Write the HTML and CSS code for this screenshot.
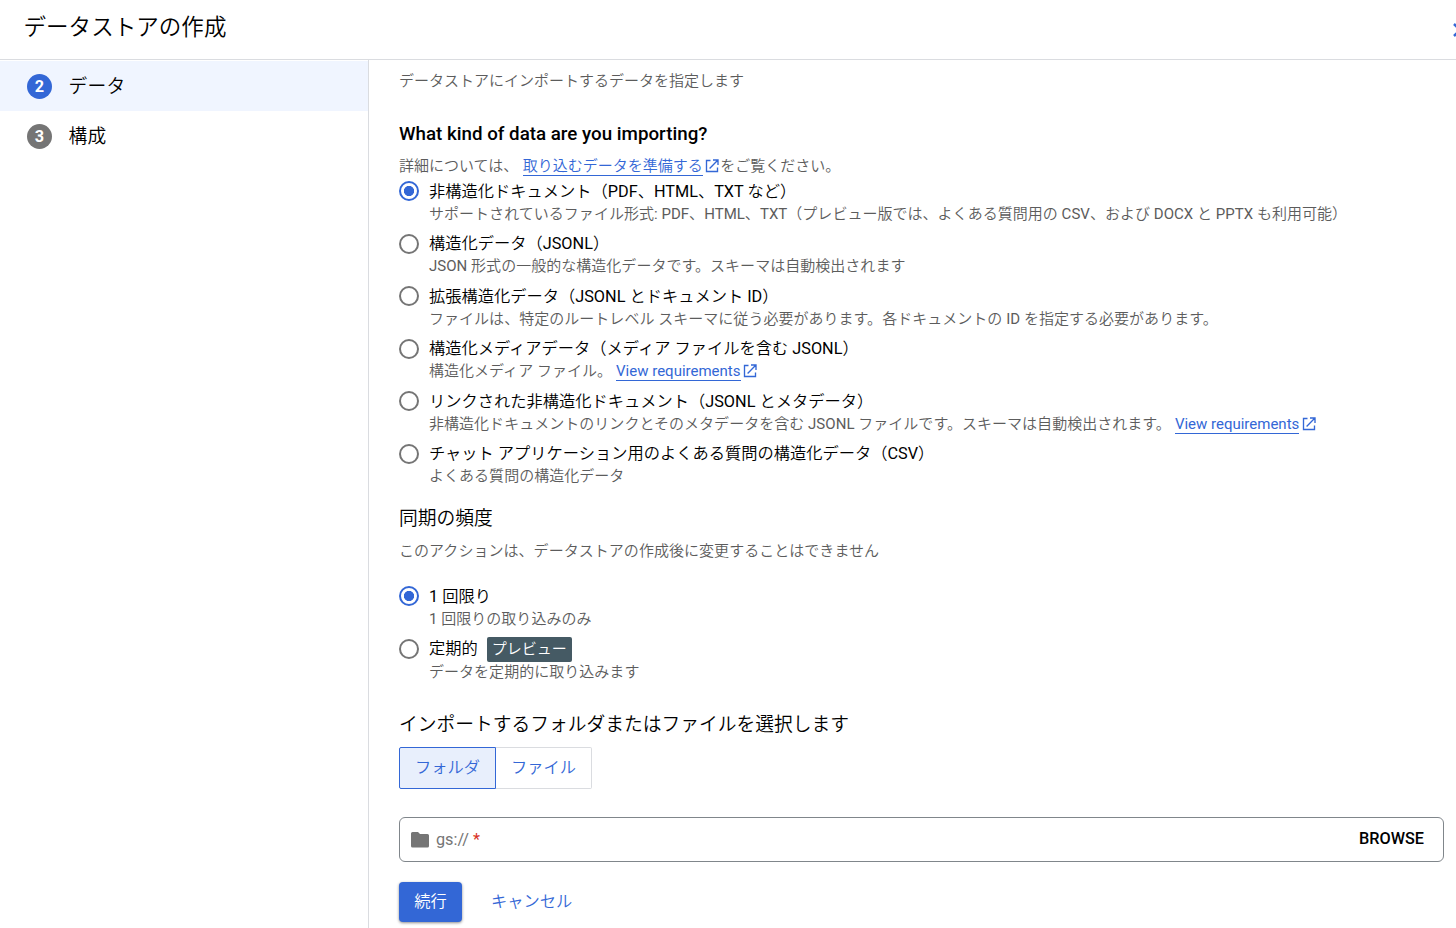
FILE: index.html
```html
<!DOCTYPE html>
<html lang="ja">
<head>
<meta charset="utf-8">
<title>データストアの作成</title>
<link rel="stylesheet" href="styles.css">
</head>
<body>
<svg class="defs" width="0" height="0">
  <symbol id="ext" viewBox="0 0 14 14"><path d="M5.500 1.500H1.500v11h11V8.500M8 1h5v5M12.700 1.300L4.600 9.400" fill="none" stroke="currentColor" stroke-width="1.350"/></symbol>
</svg>
<header class="header">
  <h1 class="title">データストアの作成</h1>
  <svg class="close" width="20" height="20" viewBox="0 0 20 20"><path d="M2 4l12 12M2 16L14 4" stroke="currentColor" stroke-width="2.500"/></svg>
</header>
<div class="body">
  <nav class="steps">
    <div class="step active"><span class="num">2</span><span class="name">データ</span></div>
    <div class="step"><span class="num">3</span><span class="name">構成</span></div>
  </nav>
  <main class="main">
    <p class="text">データストアにインポートするデータを指定します</p>
    <h2 class="heading question">What kind of data are you importing?</h2>
    <p class="text details"><span>詳細については、</span><a class="link prepare">取り込むデータを準備する</a><svg class="ext"><use href="#ext"/></svg><span>をご覧ください。</span></p>
    <div class="radios">
      <div class="option"><span class="radio on"></span><div><div class="label">非構造化ドキュメント（PDF、HTML、TXT など）</div><div class="hint"><span>サポートされているファイル形式: PDF、HTML、TXT（プレビュー版では、よくある質問用の CSV、および DOCX と PPTX も利用可能）</span></div></div></div>
      <div class="option"><span class="radio"></span><div><div class="label">構造化データ（JSONL）</div><div class="hint"><span>JSON 形式の一般的な構造化データです。スキーマは自動検出されます</span></div></div></div>
      <div class="option"><span class="radio"></span><div><div class="label">拡張構造化データ（JSONL とドキュメント ID）</div><div class="hint"><span>ファイルは、特定のルートレベル スキーマに従う必要があります。各ドキュメントの ID を指定する必要があります。</span></div></div></div>
      <div class="option"><span class="radio"></span><div><div class="label">構造化メディアデータ（メディア ファイルを含む JSONL）</div><div class="hint"><span>構造化メディア ファイル。</span><a class="link">View requirements</a><svg class="ext"><use href="#ext"/></svg></div></div></div>
      <div class="option"><span class="radio"></span><div><div class="label">リンクされた非構造化ドキュメント（JSONL とメタデータ）</div><div class="hint"><span>非構造化ドキュメントのリンクとそのメタデータを含む JSONL ファイルです。スキーマは自動検出されます。</span><a class="link">View requirements</a><svg class="ext"><use href="#ext"/></svg></div></div></div>
      <div class="option"><span class="radio"></span><div><div class="label">チャット アプリケーション用のよくある質問の構造化データ（CSV）</div><div class="hint"><span>よくある質問の構造化データ</span></div></div></div>
    </div>
    <h2 class="heading frequency">同期の頻度</h2>
    <p class="text note">このアクションは、データストアの作成後に変更することはできません</p>
    <div class="radios sync">
      <div class="option"><span class="radio on"></span><div><div class="label">1 回限り</div><div class="hint"><span>1 回限りの取り込みのみ</span></div></div></div>
      <div class="option"><span class="radio"></span><div><div class="label">定期的<span class="badge">プレビュー</span></div><div class="hint periodic"><span>データを定期的に取り込みます</span></div></div></div>
    </div>
    <h2 class="heading choose">インポートするフォルダまたはファイルを選択します</h2>
    <div class="toggle"><button class="seg selected">フォルダ</button><button class="seg">ファイル</button></div>
    <div class="field">
      <svg width="18" height="16" viewBox="0 0 18 16"><path d="M1.5 0H7l2 2h7.5Q18 2 18 3.500V14q0 1.500-1.500 1.500h-15Q0 15.500 0 14V1.500Q0 0 1.500 0z" fill="#757575"/></svg>
      <span class="prefix">gs://</span><span class="req">*</span><span class="browse">BROWSE</span>
    </div>
    <div class="actions"><button class="primary">続行</button><button class="cancel">キャンセル</button></div>
  </main>
</div>
</body>
</html>
```
FILE: styles.css
```css
* { box-sizing: border-box; margin: 0; padding: 0; }
body {
  width: 1456px; height: 928px; overflow: hidden; background: #fff; color: #000;
  font-family: Roboto, "Noto Sans CJK JP DemiLight", "Noto Sans CJK JP", sans-serif; font-weight: 400;
  display: flex; flex-direction: column; white-space: nowrap;
}
.defs { position: absolute; }
.header {
  height: 60px; flex: none; border-bottom: 1px solid #dadce0; padding: 0 0 5px 23.5px;
  display: flex; align-items: center; justify-content: space-between;
}
.title { font-size: 22.5px; font-weight: 400; line-height: 30px; letter-spacing: .05px; }
.close { color: #3367d6; margin: 5px -16px 0 0; flex: none; }
.body { flex: 1; display: flex; min-height: 0; }
.steps { width: 369px; flex: none; border-right: 1px solid #dadce0; padding-top: 1px; }
.step { height: 50px; padding-left: 27px; display: flex; align-items: center; gap: 16.5px; font-size: 18.75px; line-height: 25px; }
.step.active { background: #f0f5ff; }
.name { padding-top: 2px; letter-spacing: .2px; }
.num {
  width: 25px; height: 25px; border-radius: 50%; background: #757575; color: #fff;
  font-size: 16.25px; font-weight: 700; text-align: center;
}
.active .num { background: #3367d6; }
.main { flex: 1; min-width: 0; padding: 10px 12px 0 30px; }
.text { font-size: 15px; line-height: 22px; height: 22px; color: #5c5c5c; }
.heading { font-size: 18.75px; line-height: 25px; height: 25px; font-weight: 400; }
.heading.question { margin-top: 30px; font-weight: 500; }
.details, .hint { display: flex; align-items: center; }
.details { margin-top: 8px; }
.link { color: #3367d6; border-bottom: 1px solid #3367d6; line-height: 21px; height: 20px; }
.hint .link { margin-left: 4px; letter-spacing: 0; word-spacing: 0; }
.prepare { margin-left: 4.5px; }
.ext { width: 14px; height: 14px; color: #3367d6; margin: 0 1px 0 2.5px; flex: none; }
.radios { margin-top: 1.5px; }
.option { display: flex; gap: 10px; height: 52.5px; }
.radio { width: 20px; height: 20px; margin-top: 2.5px; flex: none; border: 2px solid #757575; border-radius: 50%; }
.radio.on { border-color: #3367d6; background: radial-gradient(circle, #3367d6 4.8px, #fff 5.4px); }
.label { font-size: 16.25px; height: 25px; line-height: 25px; display: flex; align-items: center; }
.hint { font-size: 15px; height: 20px; line-height: 20px; color: #5c5c5c; letter-spacing: .03px; }
.periodic { padding-top: 1px; }
.badge { background: #455a64; color: #fff; font-size: 15px; height: 25px; line-height: 24px; padding: 0 5px; margin: 2px 0 0 9px; border-radius: 2px; }
.frequency { margin-top: 13px; }
.note { margin-top: 8.5px; letter-spacing: .04px; }
.sync { margin-top: 21.5px; }
.choose { margin-top: 24px; }
.toggle { display: flex; margin-top: 9.5px; }
button { font-family: inherit; font-weight: 400; font-size: 16.25px; color: #3367d6; background: #fff; border: 0; padding-bottom: 4px; }
.seg { width: 97px; height: 42px; border: 1px solid #dadce0; border-radius: 0 2px 2px 0; }
.seg + .seg { width: 96px; border-left: 0; }
.seg.selected { border-color: #3367d6; background: #e8effc; border-radius: 2px 0 0 2px; }
.field { margin-top: 28px; height: 45px; border: 1px solid #80868b; border-radius: 6px; padding: 0 19px 0 11px; display: flex; align-items: center; font-size: 16.25px; }
.prefix { color: #757575; margin-left: 7px; }
.req { color: #d93025; margin-left: 4px; }
.browse { margin-left: auto; font-weight: 500; margin-bottom: 2px; }
.actions { display: flex; gap: 29px; margin-top: 20px; }
.primary { width: 63px; height: 40px; color: #fff; background: #3367d6; border-radius: 4px; box-shadow: 0 1px 3px rgba(0, 0, 0, .45); }
.cancel { height: 40px; }
```
